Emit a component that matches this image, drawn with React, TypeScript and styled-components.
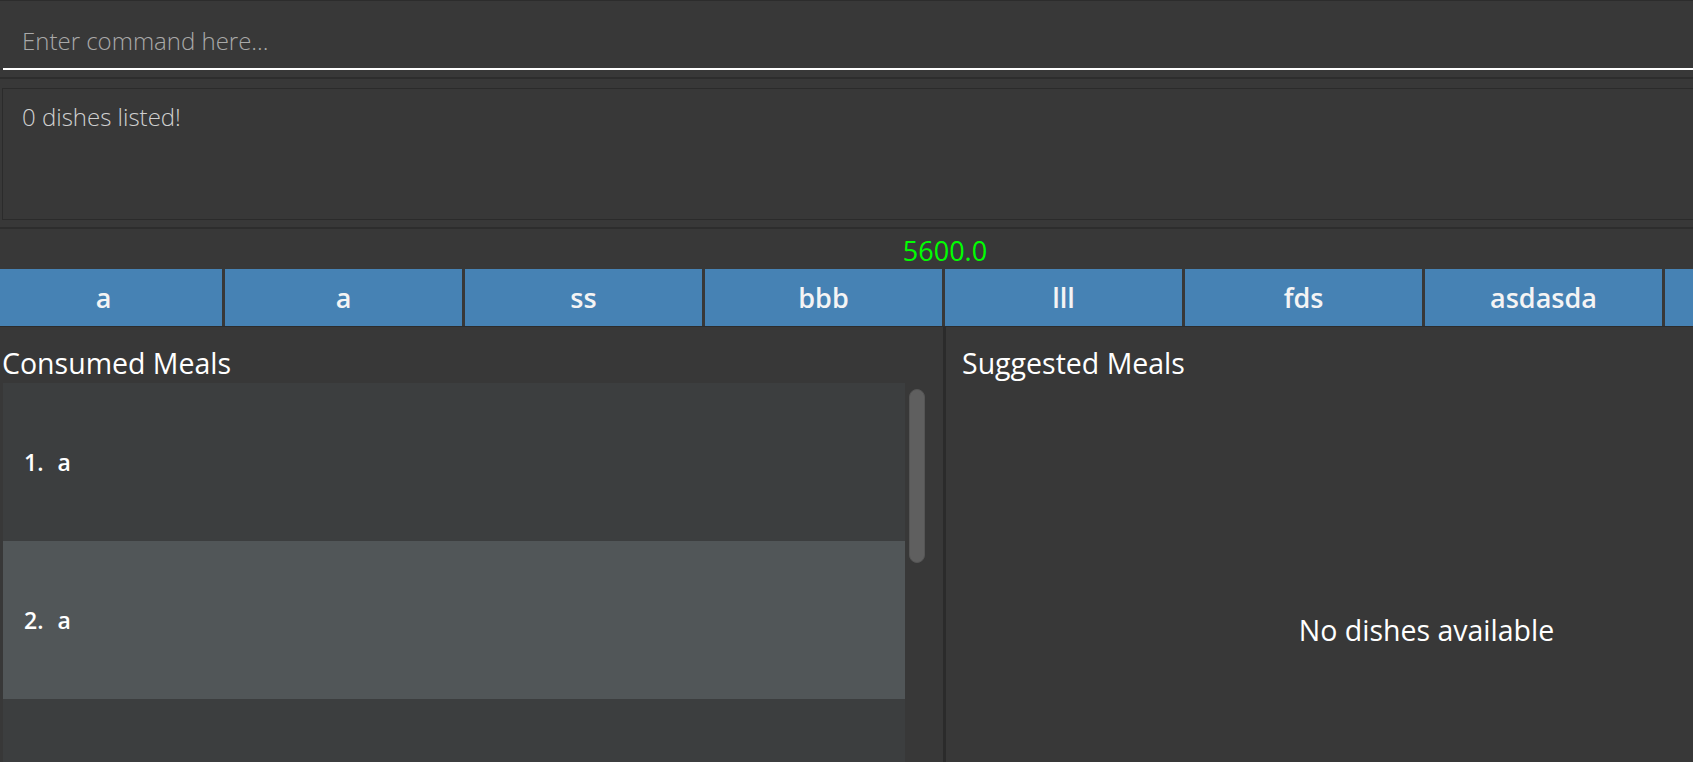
import styled, { createGlobalStyle } from "styled-components";

const GlobalStyle = createGlobalStyle`
  html, body {
    margin: 0;
    padding: 0;
    background: #383838;
    overflow: hidden;
  }

  body {
    font-family: "Open Sans", "Noto Sans", sans-serif;
  }
`;

// the window is wider than the screenshot, the last tab is only partly visible
const tabs = ["a", "a", "ss", "bbb", "lll", "fds", "asdasda", ""];
const consumed = ["a", "a"];

export default function App() {
  return (
    <>
      <GlobalStyle />
      <Window>
        <CommandBar>
          <CommandInput placeholder="Enter command here..." />
        </CommandBar>

        <ResultSection>
          <ResultBox>0 dishes listed!</ResultBox>
        </ResultSection>

        <CalorieBar>5600.0</CalorieBar>

        <TabStrip>
          {tabs.map((t, i) => (
            <Tab key={i}>{t}</Tab>
          ))}
        </TabStrip>

        <SplitArea>
          <LeftPane>
            <PaneTitle>Consumed Meals</PaneTitle>
            <ListRow>
              <MealList>
                {consumed.map((name, i) => (
                  <MealCell key={i} $odd={i % 2 === 1}>
                    <MealIndex>{i + 1}. </MealIndex>
                    <MealName>{name}</MealName>
                  </MealCell>
                ))}
              </MealList>
              <ScrollTrack>
                <ScrollThumb />
              </ScrollTrack>
            </ListRow>
          </LeftPane>

          <Divider />

          <RightPane>
            <PaneTitle>Suggested Meals</PaneTitle>
            <EmptyState>No dishes available</EmptyState>
          </RightPane>
        </SplitArea>
      </Window>
    </>
  );
}

const Window = styled.div`
  display: flex;
  flex-direction: column;
  width: 1890px;
  height: 877px;
  background: #383838;
  border-top: 1px solid #2c2c2c;
  box-sizing: border-box;
`;

const CommandBar = styled.div`
  padding: 0 0 7px 3px;
  border-bottom: 2px solid #2d2d2d;
`;

const CommandInput = styled.input`
  display: block;
  width: 100%;
  height: 69px;
  box-sizing: border-box;
  padding: 22px 20px 11px 19px;
  background: transparent;
  border: none;
  border-bottom: 2px solid #ffffff;
  outline: none;
  font-family: "Open Sans", "Noto Sans", sans-serif;
  font-weight: 300;
  font-size: 24px;
  line-height: 34px;
  color: #ffffff;

  &::placeholder {
    color: #a9a9a9;
  }
`;

const ResultSection = styled.div`
  padding: 9px 0 7px 2px;
  border-bottom: 2px solid #2d2d2d;
`;

const ResultBox = styled.div`
  height: 132px;
  box-sizing: border-box;
  padding: 11px 19px;
  border: 1px solid #2b2b2b;
  font-weight: 300;
  font-size: 24px;
  line-height: 34px;
  color: #d0d0d0;
`;

const CalorieBar = styled.div`
  height: 40px;
  display: flex;
  align-items: center;
  justify-content: center;
  padding-top: 2px;
  box-sizing: border-box;
  font-size: 27px;
  color: #00ff00;
`;

const TabStrip = styled.div`
  display: flex;
  gap: 3px;
  height: 57px;
  margin-left: -15px;
  border-bottom: 1px solid #2c2c2c;
`;

const Tab = styled.div`
  flex: 0 0 237px;
  display: flex;
  align-items: center;
  justify-content: center;
  background: #4682b4;
  font-weight: 600;
  font-size: 27px;
  color: #f4f4f4;
`;

const SplitArea = styled.div`
  flex: 1;
  display: flex;
  min-height: 0;
`;

const LeftPane = styled.div`
  flex: 0 0 943px;
  display: flex;
  flex-direction: column;
  padding: 16px 0 0 3px;
  box-sizing: border-box;
  overflow: hidden;
`;

const RightPane = styled.div`
  flex: 1;
  display: flex;
  flex-direction: column;
  padding: 16px 0 0 17px;
`;

const Divider = styled.div`
  flex: 0 0 3px;
  background: #2b2b2b;
`;

const PaneTitle = styled.div`
  height: 40px;
  font-size: 28.5px;
  line-height: 40px;
  color: #ffffff;
  margin-left: -1px;
`;

const ListRow = styled.div`
  flex: 1;
  display: flex;
  min-height: 0;
`;

const MealList = styled.div`
  flex: 0 0 902px;
  display: flex;
  flex-direction: column;
  background: #3c3e3f;
`;

const MealCell = styled.div<{ $odd: boolean }>`
  flex: 0 0 158px;
  display: flex;
  align-items: center;
  gap: 8px;
  padding-left: 21px;
  background: ${({ $odd }) => ($odd ? "#515658" : "#3c3e3f")};
  font-weight: 600;
  font-size: 23px;
  color: #ffffff;
  white-space: pre;
`;

const MealIndex = styled.span``;

const MealName = styled.span``;

const ScrollTrack = styled.div`
  flex: 0 0 25px;
  padding: 6px 4px 0 4px;
  box-sizing: border-box;
`;

const ScrollThumb = styled.div`
  width: 16px;
  height: 174px;
  box-sizing: border-box;
  border-radius: 8px;
  background: #5f5f5f;
  border: 1px solid #555555;
`;

const EmptyState = styled.div`
  flex: 1;
  display: flex;
  align-items: center;
  justify-content: center;
  font-size: 28.5px;
  color: #ffffff;
`;
